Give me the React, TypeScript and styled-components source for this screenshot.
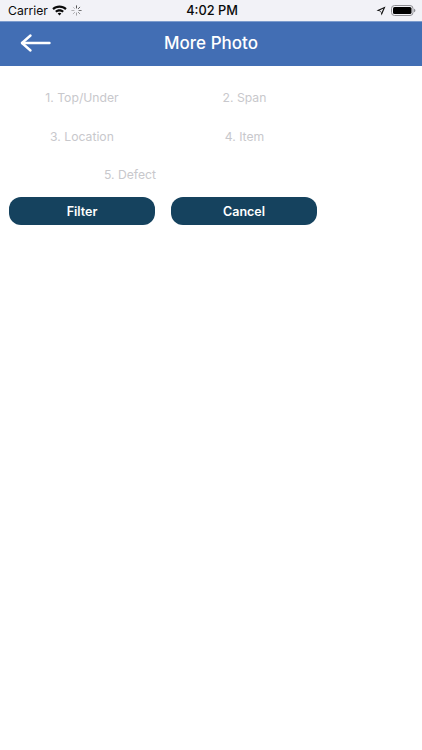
import React from "react";
import styled, { createGlobalStyle } from "styled-components";

const GlobalStyle = createGlobalStyle`
  html, body {
    margin: 0;
    padding: 0;
    background: #fff;
  }
  body {
    font-family: Inter, "Liberation Sans", sans-serif;
  }
`;

const Page = styled.div`
  width: 422px;
  height: 750px;
  background: #fff;
  overflow: hidden;
`;

const StatusBar = styled.div`
  height: 21px;
  box-sizing: border-box;
  padding: 0 6px 0 8px;
  background: #f2f2f7;
  display: grid;
  grid-template-columns: 1fr auto 1fr;
  align-items: center;
  font-size: 12.2px;
  color: #0a0a0a;
`;

const StatusLeft = styled.div`
  display: flex;
  align-items: center;
  gap: 4px;
`;

const StatusRight = styled.div`
  display: flex;
  align-items: center;
  justify-content: flex-end;
  gap: 5px;
`;

const Clock = styled.div`
  font-weight: 500;
  font-size: 12.8px;
`;

const Header = styled.header`
  height: 45px;
  padding-bottom: 3px;
  background: #426eb4;
  display: flex;
  align-items: center;
  justify-content: center;
  position: relative;
  border-top: 1px solid #7d9ccd;
  box-sizing: border-box;
`;

const BackButton = styled.button`
  position: absolute;
  left: 20px;
  top: 10px;
  padding: 0;
  border: 0;
  background: none;
  display: flex;
`;

const Title = styled.h1`
  margin: 0;
  font-size: 17px;
  font-weight: 500;
  color: #fff;
`;

const Filters = styled.div`
  width: 325px;
  margin-left: 2px;
  padding-top: 12px;
  display: grid;
  grid-template-columns: 160px 1fr;
  grid-auto-rows: 38.7px;
  align-items: center;
  justify-items: center;
`;

const FilterLabel = styled.div<{ $wide?: boolean }>`
  font-size: 12.2px;
  color: #c8c8cc;
  grid-column: ${(p) => (p.$wide ? "1 / span 2" : "auto")};
  padding-right: ${(p) => (p.$wide ? "69px" : "0")};
`;

const Actions = styled.div`
  display: flex;
  gap: 16px;
  padding-left: 9px;
  margin-top: 3px;
`;

const ActionButton = styled.button`
  width: 146px;
  height: 28px;
  padding: 0;
  border: 0;
  border-radius: 12px;
  background: #15425e;
  color: #fff;
  font-family: inherit;
  font-size: 12.5px;
  font-weight: 600;
`;

const WifiIcon = () => (
  <svg width="15" height="11" viewBox="0 0 15 11">
    <path d="M7.5 0.5C4.7 0.5 2.3 1.5 0.3 3.3L1.8 4.9C3.4 3.5 5.3 2.7 7.5 2.7S11.6 3.5 13.2 4.9L14.7 3.3C12.7 1.5 10.3 0.5 7.5 0.5Z" fill="#0a0a0a" />
    <path d="M7.5 4.2C5.8 4.2 4.3 4.8 3.1 5.9L4.6 7.5C5.4 6.8 6.4 6.4 7.5 6.4S9.6 6.8 10.4 7.5L11.9 5.9C10.7 4.8 9.2 4.2 7.5 4.2Z" fill="#0a0a0a" />
    <path d="M7.5 7.8C6.8 7.8 6.2 8.1 5.7 8.5L7.5 10.5L9.3 8.5C8.8 8.1 8.2 7.8 7.5 7.8Z" fill="#0a0a0a" />
  </svg>
);

const Spinner = () => (
  <svg width="11" height="11" viewBox="0 0 11 11" stroke="#555" strokeWidth="1" strokeLinecap="round">
    <path d="M5.5 0.8V3" />
    <path d="M5.5 8V10.2" opacity="0.5" />
    <path d="M0.8 5.5H3" opacity="0.4" />
    <path d="M8 5.5H10.2" opacity="0.8" />
    <path d="M2.2 2.2L3.7 3.7" opacity="0.3" />
    <path d="M7.3 7.3L8.8 8.8" opacity="0.6" />
    <path d="M2.2 8.8L3.7 7.3" opacity="0.4" />
    <path d="M7.3 3.7L8.8 2.2" opacity="0.9" />
  </svg>
);

const LocationIcon = () => (
  <svg width="10" height="10" viewBox="0 0 10 10">
    <path d="M9.5 0.5L0.5 4.4L4.6 5.4L5.6 9.5Z M7.4 2.6L5.3 6.9L4.9 5.1L3.1 4.7Z" fill="#111" fillRule="evenodd" />
  </svg>
);

const BatteryIcon = () => (
  <svg width="25" height="11" viewBox="0 0 25 11">
    <rect x="0.5" y="0.5" width="21.5" height="10" rx="3" fill="none" stroke="#8e8e93" />
    <rect x="2" y="2" width="18.5" height="7" rx="1.6" fill="#000" />
    <path d="M23 3.8C23.9 4 24.4 4.7 24.4 5.5S23.9 7 23 7.2Z" fill="#8e8e93" />
  </svg>
);

const BackArrow = () => (
  <svg width="31" height="22" viewBox="0 0 31 22" fill="none" stroke="#fff" strokeWidth="2.4" strokeLinecap="round" strokeLinejoin="round">
    <path d="M2 11H29.5" />
    <path d="M10.5 3.5L2 11L10.5 18.5" />
  </svg>
);

export default function App() {
  return (
    <Page>
      <GlobalStyle />
      <StatusBar>
        <StatusLeft>
          <span>Carrier</span>
          <WifiIcon />
          <Spinner />
        </StatusLeft>
        <Clock>4:02 PM</Clock>
        <StatusRight>
          <LocationIcon />
          <BatteryIcon />
        </StatusRight>
      </StatusBar>
      <Header>
        <BackButton>
          <BackArrow />
        </BackButton>
        <Title>More Photo</Title>
      </Header>
      <Filters>
        <FilterLabel>1. Top/Under</FilterLabel>
        <FilterLabel>2. Span</FilterLabel>
        <FilterLabel>3. Location</FilterLabel>
        <FilterLabel>4. Item</FilterLabel>
        <FilterLabel $wide>5. Defect</FilterLabel>
      </Filters>
      <Actions>
        <ActionButton>Filter</ActionButton>
        <ActionButton>Cancel</ActionButton>
      </Actions>
    </Page>
  );
}
